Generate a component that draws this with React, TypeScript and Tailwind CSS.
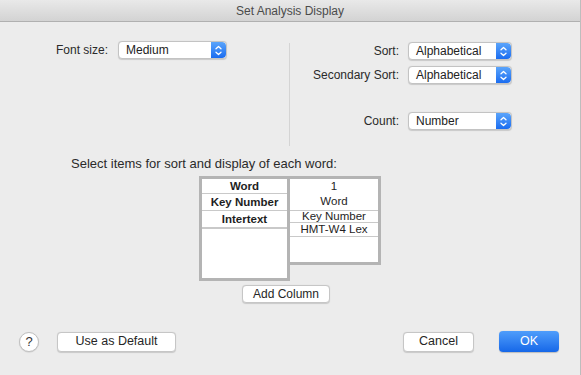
import React from "react";

function Stepper() {
    return (
        <div className="w-[15px] h-full rounded-r-[4px] bg-gradient-to-b from-[#5aa4fb] to-[#1a6cf0] flex items-center justify-center">
            <svg width="7" height="11" viewBox="0 0 7 11" fill="none" stroke="white" strokeWidth="1.3" strokeLinecap="round" strokeLinejoin="round">
                <path d="M1 3.8 L3.5 1.5 L6 3.8" />
                <path d="M1 7.2 L3.5 9.5 L6 7.2" />
            </svg>
        </div>
    );
}

function Popup({ value, width }: { value: string; width: string }) {
    return (
        <div className={`${width} h-[18px] flex bg-white rounded-[4px] border border-[#c3c3c3] shadow-[0_0.5px_1px_rgba(0,0,0,0.15)] overflow-hidden`}>
            <div className="flex-1 pl-[7px] text-[12px] leading-[16px] text-[#222]">{value}</div>
            <Stepper />
        </div>
    );
}

function Btn({ label, width }: { label: string; width: string }) {
    return (
        <div className={`${width} h-[20px] flex items-center justify-center bg-white rounded-[4px] border border-[#c6c6c6] shadow-[0_0.5px_1px_rgba(0,0,0,0.15)] text-[12.5px] text-[#262626]`}>
            {label}
        </div>
    );
}

export default function App() {
    return (
        <div className="w-[581px] h-[375px] bg-[#ececec] border-r border-[#bdbdbd] flex flex-col font-['Liberation_Sans',Arial,sans-serif] text-[#2a2a2a]">
            {/* title bar */}
            <div className="h-[22px] shrink-0 bg-gradient-to-b from-[#e9e9e9] to-[#d3d3d3] border-b border-[#b0b0b0] flex items-center justify-center text-[12px] text-[#4b4b4b]">
                Set Analysis Display
            </div>

            {/* top options */}
            <div className="flex h-[128px] shrink-0">
                <div className="w-[289px] pt-[19px]">
                    <div className="flex items-center">
                        <div className="w-[108px] text-right text-[12px]">Font size:</div>
                        <div className="ml-[10px]">
                            <Popup value="Medium" width="w-[109px]" />
                        </div>
                    </div>
                </div>
                <div className="mt-[21px] h-[103px] w-px bg-[#d4d4d4]" />
                <div className="flex-1 pt-[20px] flex flex-col">
                    <div className="flex items-center">
                        <div className="w-[109px] text-right text-[12px]">Sort:</div>
                        <div className="ml-[9px]"><Popup value="Alphabetical" width="w-[104px]" /></div>
                    </div>
                    <div className="flex items-center mt-[6px]">
                        <div className="w-[109px] text-right text-[12px]">Secondary Sort:</div>
                        <div className="ml-[9px]"><Popup value="Alphabetical" width="w-[104px]" /></div>
                    </div>
                    <div className="flex items-center mt-[28px]">
                        <div className="w-[109px] text-right text-[12px]">Count:</div>
                        <div className="ml-[9px]"><Popup value="Number" width="w-[104px]" /></div>
                    </div>
                </div>
            </div>

            <div className="mt-[6px] pl-[71px] h-[16px] leading-[16px] text-[13px]">
                Select items for sort and display of each word:
            </div>

            {/* columns */}
            <div className="mt-[4px] pl-[199px] flex items-start text-[11.5px] text-[#1e1e1e]">
                <div className="w-[91px] h-[105px] bg-white border-[3px] border-[#b4b4b4] flex flex-col font-bold">
                    <div className="h-[15px] leading-[14px] text-center border-b border-[#c9c9c9]">Word</div>
                    <div className="h-[17px] leading-[16px] text-center border-b border-[#c9c9c9]">Key Number</div>
                    <div className="h-[18px] leading-[16px] text-center border-b-2 border-[#c9c9c9]">Intertext</div>
                </div>
                <div className="w-[91px] h-[89px] bg-white border-[3px] border-l-0 border-[#b4b4b4] flex flex-col">
                    <div className="h-[14px] leading-[14px] text-center">1</div>
                    <div className="h-[18px] leading-[16px] text-center border-b border-[#c9c9c9]">Word</div>
                    <div className="h-[12px] leading-[11px] text-center border-b border-[#c9c9c9]">Key Number</div>
                    <div className="h-[14px] leading-[13px] text-center border-b border-[#c9c9c9]">HMT-W4 Lex</div>
                </div>
            </div>

            <div className="mt-[4px] pl-[242px]">
                <div className="w-[88px] h-[18px] flex items-center justify-center bg-white rounded-[4px] border border-[#c6c6c6] shadow-[0_0.5px_1px_rgba(0,0,0,0.15)] text-[12px] text-[#262626]">
                    Add Column
                </div>
            </div>

            {/* bottom buttons */}
            <div className="mt-[28px] flex items-center">
                <div className="ml-[19px] w-[20px] h-[20px] rounded-full bg-white border border-[#c0c0c0] shadow-[0_0.5px_1px_rgba(0,0,0,0.15)] flex items-center justify-center text-[13px] text-[#333]">
                    ?
                </div>
                <div className="ml-[18px]"><Btn label="Use as Default" width="w-[119px]" /></div>
                <div className="ml-[227px]"><Btn label="Cancel" width="w-[71px]" /></div>
                <div className="ml-[25px] w-[60px] h-[21px] flex items-center justify-center rounded-[4px] bg-gradient-to-b from-[#4f9dfb] to-[#1567e8] text-white text-[12.5px] shadow-[0_0.5px_1px_rgba(0,0,0,0.2)]">
                    OK
                </div>
            </div>
        </div>
    );
}
